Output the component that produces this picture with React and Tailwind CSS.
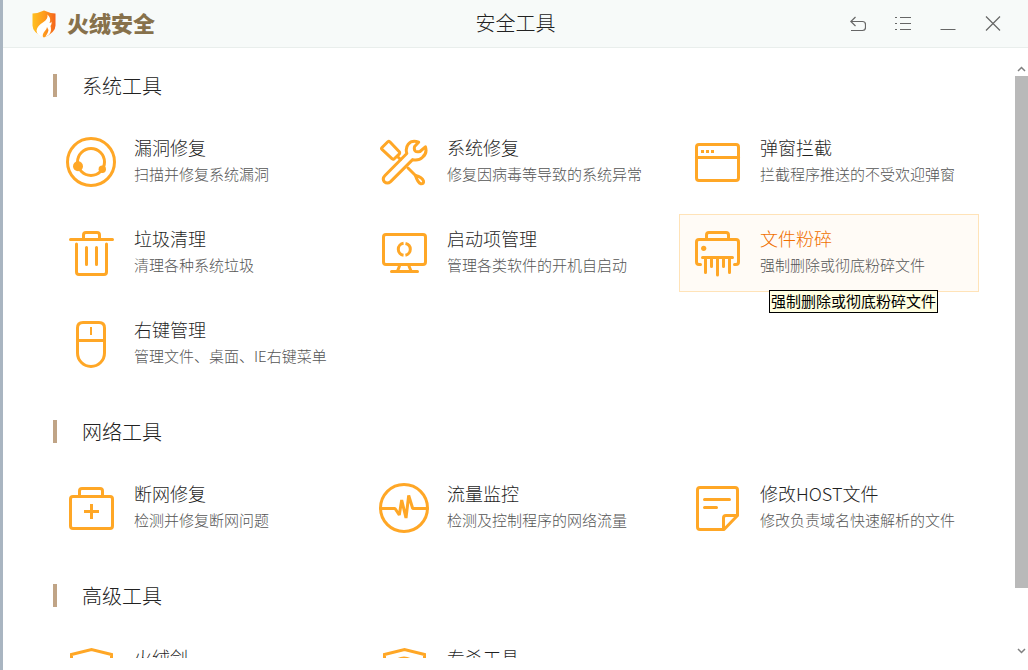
import React from 'react';

const strokeProps = {
  fill: 'none',
  stroke: '#ffa726',
  strokeWidth: 3,
  strokeLinecap: 'round',
  strokeLinejoin: 'round',
};

/* Bingkai semua ikon alat, 50x50 */
function ToolIcon({ children }) {
  return (
    <svg viewBox="0 0 50 50" className="w-[50px] h-[50px] shrink-0" aria-hidden="true" {...strokeProps}>
      {children}
    </svg>
  );
}

const icons = {
  scan: (
    <>
      <circle cx="25" cy="25" r="23.5" />
      <circle cx="25" cy="25" r="13.5" />
      <circle cx="12" cy="29.3" r="5" fill="#ffa726" stroke="none" />
      <circle cx="36.3" cy="32.3" r="3.7" fill="#ffa726" stroke="none" />
    </>
  ),
  tools: (
    <>
      <path d="M2.8 10.8 8.8 4.8Q9.8 4 10.8 4.8L20.5 15Q21 16 20.4 16.8L15 22Q14 22.6 13.2 21.8L3 12.4Q2 11.6 2.8 10.8Z" />
      <path d="M18.5 19.5 21.5 22.5M29 31 37 39" />
      <path d="M36.5 38.5Q43 40 44.5 44Q45 47 42 46.8Q38.5 45.5 36.5 38.5Z" />
      <path d="M39.6 5.2Q33 2.8 29.2 7.2Q26.2 11 27.8 16.5L6 38.5Q3 41.5 5.2 44.6Q8.4 47.5 11.6 44.6L33.6 22.6Q39.5 24.2 43.6 20.2Q48.5 16 46.4 9.8L41 14.5Q37.5 15.4 36.2 14Q34.8 12.4 35.6 9.6Z" />
    </>
  ),
  popup: (
    <>
      <rect x="4.5" y="7.5" width="42" height="36" rx="2.5" />
      <path d="M4.5 20.5h42" />
      <path d="M9 13h3v3h-3zM14 13h3v3h-3zM19 13h3v3h-3z" fill="#ffa726" stroke="none" />
    </>
  ),
  trash: (
    <>
      <path d="M4.5 11.5h42M17.5 11V7q0-2.5 2.5-2.5h11q2.5 0 2.5 2.5v4" />
      <path d="M10.5 16v28q0 2.5 2.5 2.5h25q2.5 0 2.5-2.5V16M20.5 19.5v17M30.5 19.5v17" />
    </>
  ),
  startup: (
    <>
      <rect x="4.5" y="6.5" width="42" height="30" rx="2.5" />
      <path d="M20.5 38 18.5 43M30 38 32 43M12.5 43.5h26" />
      <circle cx="25.3" cy="21.3" r="6" strokeDasharray="16.8 2" strokeDashoffset="-10" strokeLinecap="butt" />
    </>
  ),
  shred: (
    <>
      <path d="M14.5 11V7q0-2.5 2.5-2.5h17q2.5 0 2.5 2.5v4" />
      <path d="M8.5 36.5H7q-2.5 0-2.5-2.5V14q0-2.5 2.5-2.5h37q2.5 0 2.5 2.5v20q0 2.5-2.5 2.5h-1.5" />
      <circle cx="11.7" cy="20.3" r="2.6" fill="#ffa726" stroke="none" />
      <path d="M10.5 29.5h30M13.5 30v14.5M19.5 30v8.5M25.5 30v17M31.5 30v8.5M37.5 30v14.5" />
    </>
  ),
  mouse: (
    <>
      <path d="M11.5 9q0-5.5 5.5-5.5h16q5.5 0 5.5 5.5v25a13.5 13.5 0 0 1-27 0z" />
      <path d="M11.5 21.5h27" />
      <path d="M25 8v8" strokeWidth="2" strokeLinecap="butt" />
    </>
  ),
  medkit: (
    <>
      <rect x="4.5" y="13.5" width="42" height="32" rx="2.5" />
      <path d="M13.5 13V8q0-2.5 2.5-2.5h18q2.5 0 2.5 2.5v5" />
      <path d="M18 28.5h15M25.5 21v15" strokeLinecap="butt" />
    </>
  ),
  traffic: (
    <>
      <circle cx="25" cy="25" r="23.5" />
      <path d="M1.5 25.5H16L20.3 32 22.7 17 27 35 29.7 12.500 33.7 25.5H48.5" strokeLinejoin="bevel" />
    </>
  ),
  host: (
    <>
      <path d="M45.5 32.5V7q0-2.5-2.5-2.5H8Q5.5 4.5 5.5 7v37q0 2.5 2.5 2.5h24z" />
      <path d="M45 32.5H34q-2.5 0-2.5 2.5v11M12.5 16.5h25M12.5 24.5h12" />
    </>
  ),
  shield: <path d="M5.5 24V7.5L25.5 2.5 45.5 7.5V24q0 16-20 24-20-8-20-24z" strokeLinejoin="miter" />,
  shieldScan: (
    <>
      <path d="M5.5 24V7.5L25.5 2.5 45.5 7.5V24q0 16-20 24-20-8-20-24z" strokeLinejoin="miter" />
      <circle cx="25" cy="23" r="12" />
    </>
  ),
};

const sections = [
  {
    title: '系统工具',
    items: [
      { icon: 'scan', name: '漏洞修复', desc: '扫描并修复系统漏洞' },
      { icon: 'tools', name: '系统修复', desc: '修复因病毒等导致的系统异常' },
      { icon: 'popup', name: '弹窗拦截', desc: '拦截程序推送的不受欢迎弹窗' },
      { icon: 'trash', name: '垃圾清理', desc: '清理各种系统垃圾' },
      { icon: 'startup', name: '启动项管理', desc: '管理各类软件的开机自启动' },
      { icon: 'shred', name: '文件粉碎', desc: '强制删除或彻底粉碎文件', active: true },
      { icon: 'mouse', name: '右键管理', desc: '管理文件、桌面、IE右键菜单' },
    ],
  },
  {
    title: '网络工具',
    items: [
      { icon: 'medkit', name: '断网修复', desc: '检测并修复断网问题' },
      { icon: 'traffic', name: '流量监控', desc: '检测及控制程序的网络流量' },
      { icon: 'host', name: '修改HOST文件', desc: '修改负责域名快速解析的文件' },
    ],
  },
  {
    title: '高级工具',
    items: [
      { icon: 'shield', name: '火绒剑', desc: '' },
      { icon: 'shieldScan', name: '专杀工具', desc: '' },
    ],
  },
];

function ToolCard({ item }) {
  return (
    <div className="relative">
      <button
        className={`w-full h-[78px] px-3 flex items-center gap-[18px] border text-left ${
          item.active ? 'bg-[#fffbf6] border-[#ffe3b8]' : 'border-transparent'
        }`}
      >
        <ToolIcon>{icons[item.icon]}</ToolIcon>
        <span className="flex flex-col gap-[3px] pb-[3px] whitespace-nowrap">
          <span className={`text-lg leading-6 ${item.active ? 'text-[#f07000]' : 'text-[#1f1f1f]'}`}>{item.name}</span>
          <span className="text-[15px] leading-6 h-6 text-[#555555]">{item.desc}</span>
        </span>
      </button>
      {item.active && (
        <div role="tooltip" className="absolute left-[90px] top-[76px] z-10 px-px pb-px border border-black bg-[#ffffe1] text-black text-[15px] leading-5 font-normal whitespace-nowrap">
          {item.desc}
        </div>
      )}
    </div>
  );
}

function Header() {
  return (
    <header className="h-12 shrink-0 grid grid-cols-3 items-center bg-[#f7faf9] border-b border-[#e9eeec]">
      {/* Logo */}
      <div className="flex items-center gap-2.5 pl-7">
        <svg viewBox="0 0 26 28" className="w-[26px] h-7" aria-hidden="true">
          <defs>
            <linearGradient id="flame" x1="0" y1="0" x2="1" y2="0">
              <stop offset="0" stopColor="#ffc021" />
              <stop offset="0.5" stopColor="#ff9c1c" />
              <stop offset="1" stopColor="#f4631b" />
            </linearGradient>
          </defs>
          <path d="M1.5 3.5Q8 3 13 .5q5 2.500 11.5 3v12q0 7-11.5 12Q1.500 22.500 1.500 15.500z" fill="url(#flame)" />
          <path d="M16.500 4.500q.500 4.500-4 7.500-6.500 4-7 8.500 0 2.500 2 4.500 2.500 1.800 4.500 2-1-2.500 1.500-5.500 2.500-2.500 2.500-4.500 2 2.500 1 5-1 2.500-2.500 4.500 5-1.500 5.500-6.500 0-2.500-.500-4 1.500-1.500 1-4.500-.800 1.500-2 1.500Q20.500 8.500 16.500 4.500z" fill="#fff" />
        </svg>
        <span className="pb-1 text-[22px] leading-7 font-black text-[#87714b]">火绒安全</span>
      </div>
      <h1 className="pb-0.5 text-xl leading-7 text-center text-[#222222]">安全工具</h1>
      {/* Tombol jendela */}
      <div className="flex justify-end gap-[21px] pr-[23px] text-[#666666]">
        <button aria-label="返回" className="w-6 h-6 flex items-center justify-center">
          <svg viewBox="0 0 16 16" className="w-4 h-4" fill="none" stroke="currentColor" strokeWidth="1.2">
            <path d="M5.5 1 .8 5.500 5.500 10M1 5.500h11.500q3 0 3 3v3q0 3-3 3H1" />
          </svg>
        </button>
        <button aria-label="菜单" className="w-6 h-6 flex items-center justify-center">
          <svg viewBox="0 0 16 16" className="w-4 h-4" fill="none" stroke="currentColor">
            <path d="M0 1.5h2M5 1.5h11M0 7.5h2M5 7.5h11M0 13.5h2M5 13.5h11" />
          </svg>
        </button>
        <button aria-label="最小化" className="w-6 h-6 flex items-center justify-center">
          <svg viewBox="0 0 16 16" className="w-4 h-4" fill="none" stroke="currentColor">
            <path d="M.5 13.5h15" />
          </svg>
        </button>
        <button aria-label="关闭" className="w-6 h-6 flex items-center justify-center">
          <svg viewBox="0 0 16 16" className="w-4 h-4" fill="none" stroke="currentColor" strokeWidth="1.2">
            <path d="M1 .5l14 14M15 .5 1 14.5" />
          </svg>
        </button>
      </div>
    </header>
  );
}

function Scrollbar() {
  return (
    <div className="w-[13px] shrink-0 mt-3.5 flex flex-col text-[#808080]">
      <button aria-label="向上滚动" className="h-3.5 flex items-center justify-center">
        <svg viewBox="0 0 9 6" className="w-[9px] h-1.5" fill="none" stroke="currentColor" strokeWidth="1.5">
          <path d="M1 5l3.5-3.5L8 5" />
        </svg>
      </button>
      <div className="h-[512px] bg-[#b9b9b9]"></div>
      <button aria-label="向下滚动" className="h-3.5 mt-auto flex items-center justify-center">
        <svg viewBox="0 0 9 6" className="w-[9px] h-1.5" fill="none" stroke="currentColor" strokeWidth="1.5">
          <path d="M1 1l3.5 3.5L8 1" />
        </svg>
      </button>
    </div>
  );
}

export default function App() {
  return (
    <div className="h-screen flex flex-col bg-white border-l-3 border-[#a9b5c1] pb-3 overflow-hidden font-light font-['Noto_Sans_CJK_SC',sans-serif]">
      <Header />
      <div className="flex-1 min-h-0 flex">
        <main className="flex-1 min-w-0 overflow-hidden pl-[50px] pr-9 pt-[26px] flex flex-col gap-[37px]">
          {sections.map((section) => (
            <section key={section.title} className="shrink-0">
              <h2 className="h-[23px] mb-[26px] pl-[25px] flex items-center border-l-4 border-[#c0a486] text-xl text-[#222222]">
                {section.title}
              </h2>
              <div className="grid grid-cols-3 gap-[13px]">
                {section.items.map((item) => (
                  <ToolCard key={item.name} item={item} />
                ))}
              </div>
            </section>
          ))}
        </main>
        <Scrollbar />
      </div>
    </div>
  );
}
